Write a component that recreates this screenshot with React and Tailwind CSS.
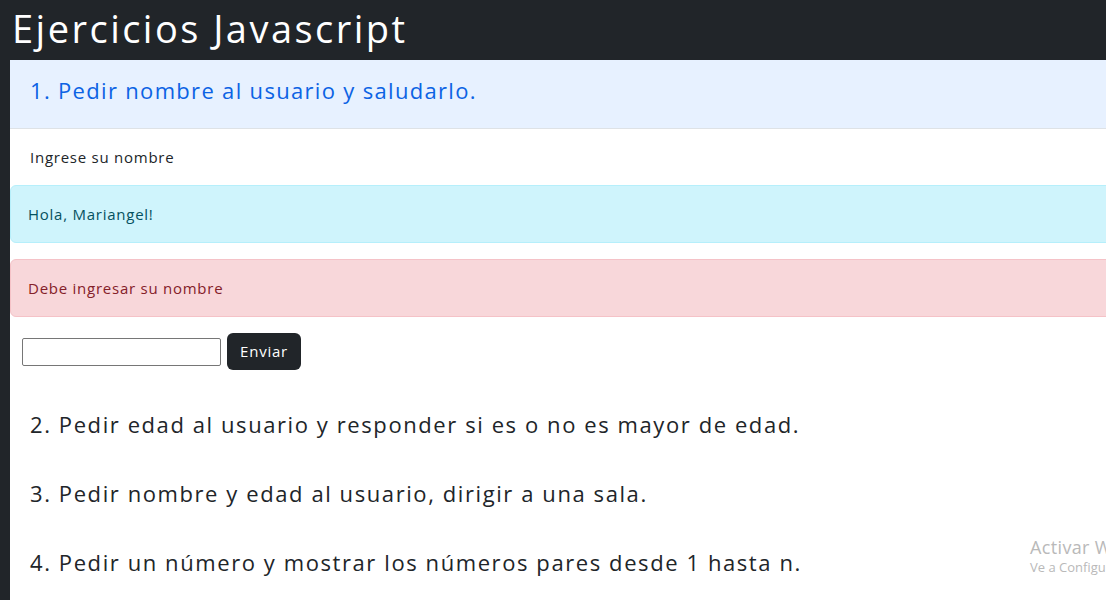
const font = { fontFamily: '"Open Sans", "Noto Sans", sans-serif' };

const App = () => {
  return (
    <div className="relative h-[600px] w-full overflow-hidden bg-[#212529]" style={font}>
      {/* Header */}
      <header className="h-[60px] pl-3">
        <h1 className="text-[38px] leading-[56px] tracking-[0.065em] text-white">Ejercicios Javascript</h1>
      </header>

      {/* Main */}
      <main className="ml-[10px] w-[1200px] bg-white pb-10">
        {/* Card header */}
        <div className="h-[69px] border-b border-[#dee2e6] bg-[#e7f1ff] pl-5 pt-[16px]">
          <h2 className="text-[22px] leading-[28px] tracking-[0.06em] text-[#0c63e4]">
            1. Pedir nombre al usuario y saludarlo.
          </h2>
        </div>

        {/* Card body */}
        <div className="pt-[19px] text-[15px] tracking-[0.05em]">
          <p className="pl-5 leading-[19px] text-[#212529]">Ingrese su nombre</p>

          <div className="mt-[18px] flex h-[58px] items-center rounded-md border border-[#b6effb] bg-[#cff4fc] pl-[17px] text-[#055160]">
            Hola, Mariangel!
          </div>

          <div className="mt-[16px] flex h-[58px] items-center rounded-md border border-[#f5c2c7] bg-[#f8d7da] pl-[17px] text-[#842029]">
            Debe ingresar su nombre
          </div>

          <div className="mt-[16px] flex items-center gap-[6px] pl-3">
            <input
              type="text"
              className="h-[28px] w-[199px] rounded-[2px] border border-[#767676] px-1"
            />
            <button className="h-[37px] w-[74px] rounded-md bg-[#212529] text-white">Enviar</button>
          </div>
        </div>

        {/* Remaining exercises */}
        <div className="mt-[40px] flex flex-col gap-[41px] pl-5 text-[22px] leading-[28px] tracking-[0.072em] text-[#212529]">
          <h2>2. Pedir edad al usuario y responder si es o no es mayor de edad.</h2>
          <h2>3. Pedir nombre y edad al usuario, dirigir a una sala.</h2>
          <h2>4. Pedir un número y mostrar los números pares desde 1 hasta n.</h2>
        </div>
      </main>

      {/* Windows watermark */}
      <div className="absolute left-[1030px] top-[535px] whitespace-nowrap text-[#b9b9b9]">
        <p className="text-[18px] leading-6 tracking-[0.02em]">Activar Windows</p>
        <p className="text-[13px] leading-4">Ve a Configuración para activar Windows.</p>
      </div>
    </div>
  );
};

export default App;
